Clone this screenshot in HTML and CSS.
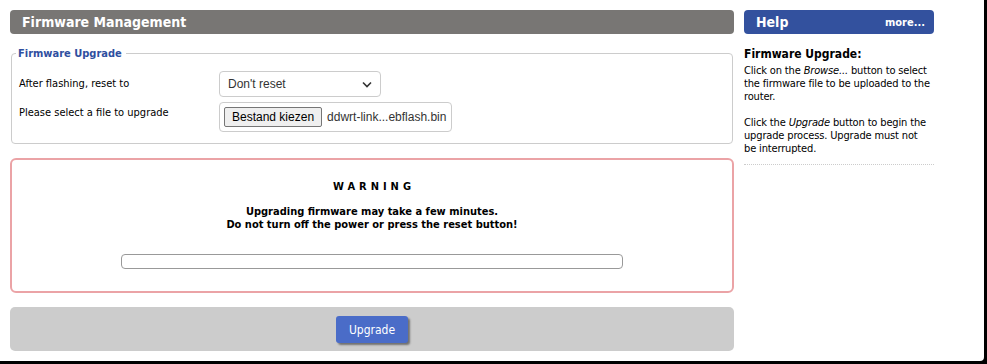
FILE: index.html
```html
<!DOCTYPE html>
<html lang="en">
<head>
    <meta charset="UTF-8">
    <title>Firmware Management</title>
    <link rel="stylesheet" href="styles.css">
</head>
<body>
    <div class="page">
        <div class="main">
            <h2 class="bar">Firmware Management</h2>
            <fieldset class="box">
                <legend>Firmware Upgrade</legend>
                <div class="row">
                    <div class="label">After flashing, reset to</div>
                    <div class="select">
                        <span>Don't reset</span>
                        <svg width="10" height="7" viewBox="0 0 10 7"><path d="M1 1.5 L5 5.5 L9 1.5" fill="none" stroke="#333" stroke-width="1.6"/></svg>
                    </div>
                </div>
                <div class="row">
                    <div class="label label-file">Please select a file to upgrade</div>
                    <div class="file">
                        <span class="file-btn">Bestand kiezen</span>
                        <span class="file-name">ddwrt-link...ebflash.bin</span>
                    </div>
                </div>
            </fieldset>
            <div class="warning">
                <div class="warning-title">WARNING</div>
                <p>Upgrading firmware may take a few minutes.<br>Do not turn off the power or press the reset button!</p>
                <div class="progress"></div>
            </div>
            <div class="submit-bar">
                <button type="button" class="button">Upgrade</button>
            </div>
        </div>
        <div class="help">
            <div class="help-bar">
                <span class="help-title">Help</span>
                <span class="help-more">more...</span>
            </div>
            <dl>
                <dt>Firmware Upgrade:</dt>
                <dd>Click on the <em>Browse...</em> button to select the firmware file to be uploaded to the router.</dd>
                <dd>Click the <em>Upgrade</em> button to begin the upgrade process. Upgrade must not be interrupted.</dd>
            </dl>
        </div>
    </div>
</body>
</html>
```

FILE: styles.css
```css
html {
    background-color: #000;
}
body {
    margin: 0;
    font-family: "DejaVu Sans Condensed", "DejaVu Sans", sans-serif;
    font-size: 11px;
    color: #000;
}
.page {
    width: 984px;
    height: 361px;
    box-sizing: border-box;
    background-color: #fff;
    border-bottom-right-radius: 4px;
    padding: 10px 0 0 10px;
    display: flex;
    gap: 10px;
}
.main {
    width: 724px;
}
.bar {
    margin: 0;
    height: 24px;
    line-height: 24px;
    padding-left: 12px;
    background-color: #787674;
    color: #fff;
    font-size: 14px;
    font-weight: bold;
    border-radius: 4px;
}
.box {
    margin: 13px 1px 0 1px;
    padding: 11px 7px 11px 7px;
    border: 1px solid #ccc;
    border-radius: 4px;
}
.box legend {
    padding: 0 4px 0 2px;
    margin-left: -3px;
    color: #2f4f9f;
    font-weight: bold;
    font-size: 11px;
}
.row {
    display: flex;
    margin-bottom: 5px;
}
.row:last-child {
    margin-bottom: 0;
}
.label {
    width: 200px;
    line-height: 26px;
}
.label-file {
    line-height: 22px;
}
.select {
    width: 162px;
    height: 26px;
    box-sizing: border-box;
    border: 1px solid #ccc;
    border-radius: 4px;
    display: flex;
    align-items: center;
    justify-content: space-between;
    padding: 0 8px 0 8px;
    font-family: "Liberation Sans", Arial, sans-serif;
    font-size: 12px;
    color: #333;
}
.file {
    width: 233px;
    height: 30px;
    box-sizing: border-box;
    border: 1px solid #ccc;
    border-radius: 4px;
    display: flex;
    align-items: center;
    padding-left: 4px;
    gap: 5px;
    white-space: nowrap;
    font-family: "Liberation Sans", Arial, sans-serif;
    font-size: 12px;
    color: #333;
}
.file-btn {
    flex-shrink: 0;
    height: 20px;
    line-height: 18px;
    box-sizing: border-box;
    padding: 0 7px;
    background-color: #efefef;
    border: 1px solid #767676;
    border-radius: 2px;
    color: #000;
}
.warning {
    margin-top: 14px;
    height: 135px;
    box-sizing: border-box;
    border: 2px solid #eba3a6;
    border-radius: 6px;
    text-align: center;
    padding-top: 20px;
}
.warning-title {
    font-weight: bold;
    letter-spacing: 4px;
    padding-left: 4px;
    line-height: 13px;
}
.warning p {
    margin: 12px 0 0 0;
    font-weight: bold;
    line-height: 13px;
}
.progress {
    width: 502px;
    height: 15px;
    box-sizing: border-box;
    margin: 23px auto 0 auto;
    border: 1px solid #999;
    border-radius: 4px;
}
.submit-bar {
    margin-top: 14px;
    height: 44px;
    background-color: #ccc;
    border-radius: 5px;
    display: flex;
    justify-content: center;
    padding-top: 9px;
    box-sizing: border-box;
}
.button {
    width: 72px;
    height: 27px;
    border: none;
    border-radius: 3px;
    background-color: #4a6cc8;
    color: #fff;
    font-family: "DejaVu Sans Condensed", "DejaVu Sans", sans-serif;
    font-size: 12px;
    box-shadow: 2px 2px 2px rgba(0, 0, 0, 0.45);
}
.help {
    width: 190px;
}
.help-bar {
    height: 24px;
    background-color: #33519e;
    border-radius: 4px;
    color: #fff;
    font-weight: bold;
    display: flex;
    justify-content: space-between;
    align-items: center;
    padding: 0 9px 0 12px;
}
.help-title {
    font-size: 14px;
}
.help dl {
    margin: 13px 0 0 0;
    padding-bottom: 9px;
    border-bottom: 1px dotted #ccc;
}
.help dt {
    font-weight: bold;
    font-size: 12px;
    line-height: 14px;
    margin-bottom: 3px;
}
.help dd {
    margin: 0 3px 13px 0;
    line-height: 13px;
    letter-spacing: -0.15px;
}
.help dd:last-child {
    margin-bottom: 0;
}
```
